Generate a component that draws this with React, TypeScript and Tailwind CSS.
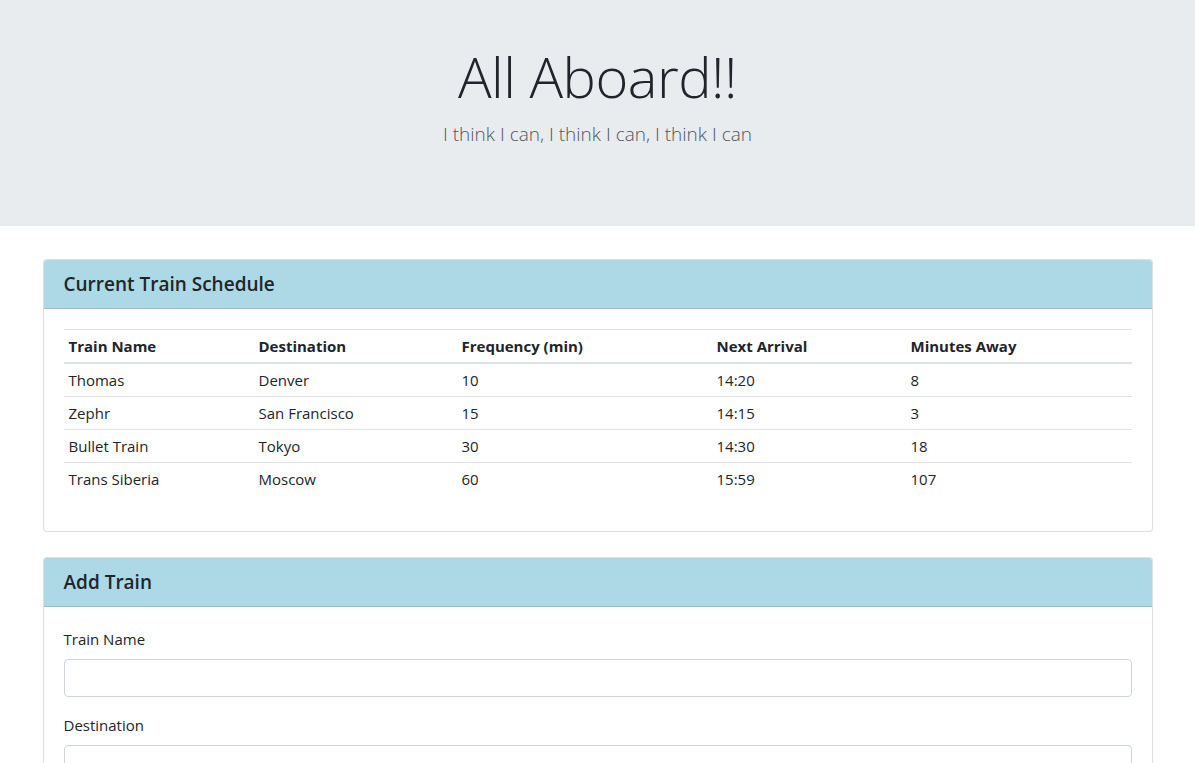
const trains = [
  { name: "Thomas", dest: "Denver", freq: "10", next: "14:20", away: "8" },
  { name: "Zephr", dest: "San Francisco", freq: "15", next: "14:15", away: "3" },
  { name: "Bullet Train", dest: "Tokyo", freq: "30", next: "14:30", away: "18" },
  { name: "Trans Siberia", dest: "Moscow", freq: "60", next: "15:59", away: "107" },
];

const font = "font-['Open_Sans','Noto_Sans',sans-serif]";

function Card({ title, children }: { title: string; children: React.ReactNode }) {
  return (
    <div className="border border-black/[0.125] rounded-[4px] overflow-hidden bg-white mb-[25px]">
      <div className="bg-[#add8e6] px-5 h-[49px] flex items-center border-b border-black/[0.125]">
        <h5 className="text-[19px] font-semibold text-[#212529] leading-[1.2]">{title}</h5>
      </div>
      <div className="p-5">{children}</div>
    </div>
  );
}

export default function App() {
  return (
    <div className={`${font} text-[#212529] text-[15px] leading-[24px] bg-white min-h-screen`}>
      {/* Jumbotron */}
      <div className="bg-[#e9ecef] h-[226px] flex flex-col items-center pt-[43px] mb-[33px]">
        <h1 className="text-[56px] font-light leading-[1.2] tracking-[-0.5px]">All Aboard!!</h1>
        <p className="text-[19px] font-light text-[#50565c] mt-[10px] leading-[1.5]">I think I can, I think I can, I think I can</p>
      </div>

      <div className="w-[1110px] mx-auto">
        <Card title="Current Train Schedule">
          <table className="w-full border-collapse mb-4 text-left">
            <thead>
              <tr className="border-t border-[#dee2e6] border-b-2">
                <th className="w-[190px] px-[5px] py-[4px] font-bold">Train Name</th>
                <th className="w-[203px] px-[5px] py-[4px] font-bold">Destination</th>
                <th className="w-[255px] px-[5px] py-[4px] font-bold">Frequency (min)</th>
                <th className="w-[194px] px-[5px] py-[4px] font-bold">Next Arrival</th>
                <th className="px-[5px] py-[4px] font-bold">Minutes Away</th>
              </tr>
            </thead>
            <tbody>
              {trains.map((t, i) => (
                <tr key={t.name} className={i === 0 ? "" : "border-t border-[#dee2e6]"}>
                  <td className="px-[5px] py-[4px]">{t.name}</td>
                  <td className="px-[5px] py-[4px]">{t.dest}</td>
                  <td className="px-[5px] py-[4px]">{t.freq}</td>
                  <td className="px-[5px] py-[4px]">{t.next}</td>
                  <td className="px-[5px] py-[4px]">{t.away}</td>
                </tr>
              ))}
            </tbody>
          </table>
        </Card>

        <Card title="Add Train">
          <div className="mb-4">
            <label className="block mb-2">Train Name</label>
            <input className="block w-full h-[38px] border border-[#ced4da] rounded-[4px] px-3" />
          </div>
          <div className="mb-4">
            <label className="block mb-2">Destination</label>
            <input className="block w-full h-[38px] border border-[#ced4da] rounded-[4px] px-3" />
          </div>
          <div className="mb-4">
            <label className="block mb-2">First Train Time (HH:mm)</label>
            <input className="block w-full h-[38px] border border-[#ced4da] rounded-[4px] px-3" />
          </div>
        </Card>
      </div>
    </div>
  );
}
